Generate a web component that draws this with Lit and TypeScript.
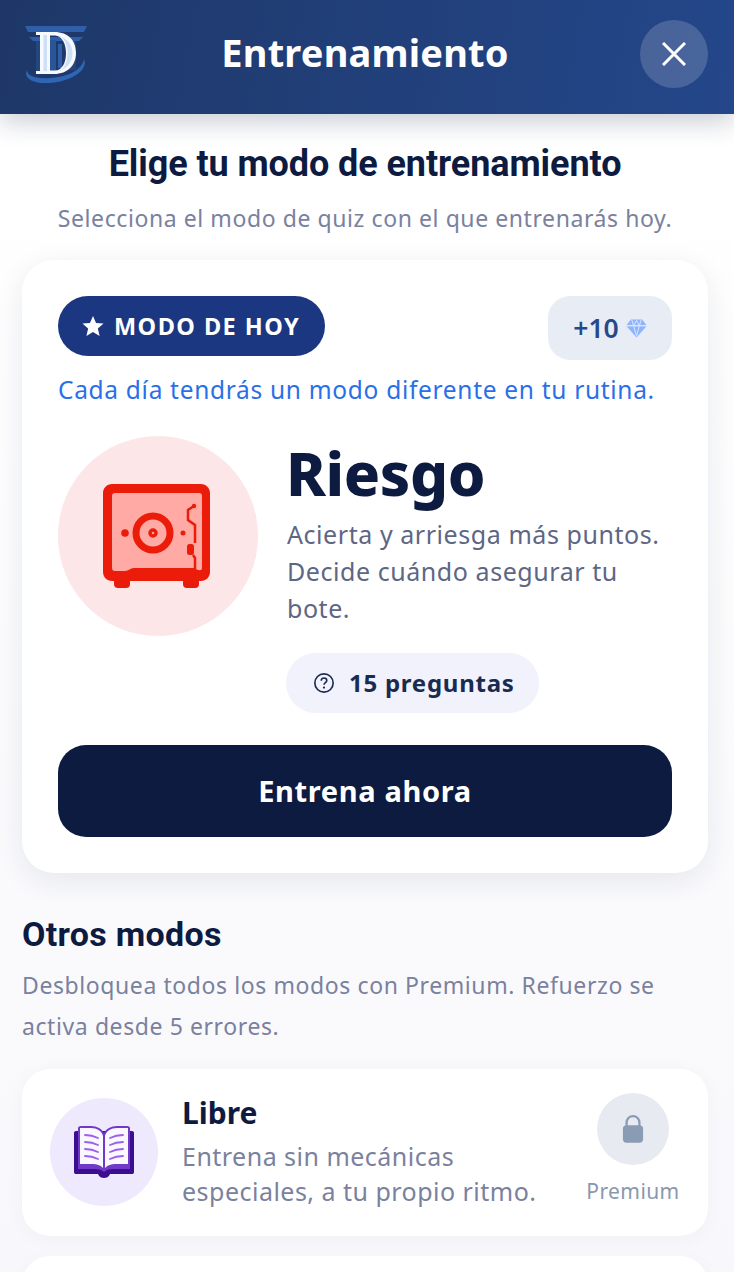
import { LitElement, html, css, svg } from "lit";
import { customElement } from "lit/decorators.js";

const logo = svg`<svg class="logo" viewBox="0 0 64 60" width="64" height="60" aria-hidden="true">
  <path d="M1 0H63L60 6H4Z" fill="#2f5fa8"/>
  <path d="M5 11H59L55 15H9Z" fill="#2f5fa8"/>
  <path d="M12 15H20V46H12ZM44 15H52V44H44Z" fill="#24467f"/>
  <path d="M60 33C65 45 45 56 25 57C9 58 -1 52 3 44C3 50 12 53 26 52C44 51 58 44 60 33Z" fill="#2f66b4"/>
  <path d="M26 14H32V45H26Z" fill="#2a5596"/>
  <path d="M34 18H38V42H34Z" fill="#2f5fa8"/>
  <path fill-rule="evenodd" d="M12 6H30C45 6 52 15 52 27C52 39 44 48 30 48H12V45H16V9H12ZM26 9.500V44.500H31C38 44.500 42 37 42 27C42 18 38 9.500 31 9.500Z" fill="#f6f9fe"/>
  <path d="M19.500 9H23V45H19.500ZM38 11C44 14 48.500 19 48.500 27C48.500 35 44 41 38 44C41.500 39 43.500 34 43.500 27C43.500 20 41.500 15 38 11Z" fill="#cfe0f6"/>
</svg>`;

const safe = svg`<svg class="safe" viewBox="0 0 107 104" width="107" height="104" aria-hidden="true">
  <rect x="11" y="85" width="16" height="19" rx="4" fill="#e81c0c"/>
  <rect x="80" y="85" width="16" height="19" rx="4" fill="#e81c0c"/>
  <rect x="1" y="1" width="105" height="95" rx="9" fill="#ffaaa4"/>
  <path fill-rule="evenodd" d="M9 0H98C103 0 107 4 107 9V88C107 93 103 97 98 97H9C4 97 0 93 0 88V9C0 4 4 0 9 0ZM12 9C10 9 9 10 9 12V83C9 86 10 87 12 87H22C26 87 27 84 31 84H92C95 87 99 87 99 84V12C99 10 98 9 96 9Z" fill="#ec1c0a"/>
  <path d="M91 22L85 26V36L92 41V59M90 71L92 74V85" fill="none" stroke="#ec1c0a" stroke-width="2.500"/>
  <rect x="84" y="60" width="7" height="11" rx="2.500" fill="#ec1c0a"/>
  <circle cx="91" cy="22" r="2.200" fill="#ec1c0a"/>
  <circle cx="50" cy="49" r="17" fill="#ffaaa4" stroke="#ec1c0a" stroke-width="7"/>
  <circle cx="50" cy="49" r="3" fill="#ffaaa4" stroke="#ec1c0a" stroke-width="3.500"/>
  <circle cx="22" cy="49" r="3.800" fill="#ec1c0a"/>
  <circle cx="80" cy="49" r="2.500" fill="#ec1c0a"/>
</svg>`;

const book = svg`<svg viewBox="0 0 62 54" width="62" height="54" aria-hidden="true">
  <path d="M3 6H59C60.500 6 61 7 61 8V47C61 48.500 60 49 59 49H37C36 52 33 53 31 53C29 53 26 52 25 49H3C2 49 1 48.500 1 47V8C1 7 1.500 6 3 6Z" fill="#3c0d8e"/>
  <path d="M5 44V3C5 2 6 1 8 1H18C24 1 29 4 31 8C33 4 38 1 44 1H54C56 1 57 2 57 3V44H40C36 44 33 45 31 47C29 45 26 44 22 44Z" fill="#7039c6"/>
  <path d="M7 39V3H18C24 3 29 6 30 11V43C27 40 24 39 20 39ZM55 39V3H44C38 3 33 6 32 11V43C35 40 38 39 42 39Z" fill="#faf7ff"/>
  <path d="M12 10C17 10 21 11 25 13M12 17C17 17 21 18 25 20M12 24C17 24 21 25 25 27M12 31C17 31 21 32 25 34M50 10C45 10 41 11 37 13M50 17C45 17 41 18 37 20M50 24C45 24 41 25 37 27M50 31C45 31 41 32 37 34" fill="none" stroke="#9a62e8" stroke-width="1.800" stroke-linecap="round"/>
</svg>`;

@customElement("app-root")
export class AppRoot extends LitElement {
  static styles = css`
    :host { display: block; width: 734px; height: 1272px; overflow: hidden; background: linear-gradient(180deg, #ffffff 10%, #f8f8fc 100%); font-family: "Noto Sans", sans-serif; }
    .header { height: 114px; display: grid; grid-template-columns: 68px 1fr 68px; align-items: center; padding: 0 26px 0 24px; box-sizing: border-box; background: linear-gradient(100deg, #1e3768 0%, #24478a 100%); box-shadow: 0 8px 24px rgba(20, 30, 70, 0.22); position: relative; color: #fff; }
    .logo { display: block; margin-top: -2px; }
    .header h1 { margin: 0; text-align: center; font: 700 38px/48px "Noto Sans", sans-serif; letter-spacing: 0.2px; position: relative; left: -1px; top: -5px; }
    .close { width: 68px; height: 68px; border-radius: 50%; background: rgba(255, 255, 255, 0.17); display: grid; place-items: center; margin-top: -6px; }
    .intro { text-align: center; padding: 27px 26px 0 22px; }
    .intro h2 { margin: 0; font: 700 36px/46px Roboto, sans-serif; color: #0d1b40; letter-spacing: -0.08px; white-space: nowrap; }
    .intro p { margin: 17px 0 0; font: 400 23px/28px "Noto Sans", sans-serif; color: #7a819e; letter-spacing: 0.58px; white-space: nowrap; }
    .card { margin: 28px 26px 0 22px; height: 613px; box-sizing: border-box; padding: 36px; background: #fff; border-radius: 32px; box-shadow: 0 8px 30px rgba(20, 30, 70, 0.09); }
    .top { display: flex; justify-content: space-between; align-items: flex-start; }
    .badge { height: 60px; width: 267px; box-sizing: border-box; border-radius: 30px; background: #1b3781; color: #fff; display: flex; align-items: center; gap: 10px; padding-left: 24px; font: 700 23.500px/30px "Noto Sans", sans-serif; letter-spacing: 1.45px; }
    .chip { width: 124px; height: 64px; border-radius: 22px; background: #e8edf5; display: flex; align-items: center; justify-content: center; gap: 7px; color: #27498b; font: 600 26.500px/30px "Noto Sans", sans-serif; }
    .daily { margin: 14px 0 0; font: 400 24.500px/32px "Noto Sans", sans-serif; color: #2b6fe8; letter-spacing: 0.69px; height: 32px; white-space: nowrap; }
    .hero { display: flex; gap: 29px; margin-top: 30px; height: 309px; }
    .hero-icon { width: 200px; height: 200px; border-radius: 50%; background: #fce6e8; display: grid; place-items: center; flex: none; }
    .safe { margin-right: 3px; }
    .hero-text { display: flex; flex-direction: column; align-items: flex-start; min-width: 0; }
    .hero-text h3 { margin: 0 0 0 -1px; font: 800 60px/74px "Noto Sans", sans-serif; letter-spacing: -0.4px; color: #0d1b40; height: 80px; }
    .hero-text p { margin: 0; font: 400 25px/37px "Noto Sans", sans-serif; letter-spacing: 0.56px; color: #5d6685; white-space: nowrap; }
    .pill { margin-top: 26px; margin-left: -1px; width: 253px; height: 60px; box-sizing: border-box; border-radius: 30px; background: #f1f2fb; display: flex; align-items: center; gap: 14px; padding-left: 27px; font: 700 24px/30px "Noto Sans", sans-serif; letter-spacing: 0.75px; color: #1a2b52; }
    .cta { height: 92px; border-radius: 28px; background: #0d1b40; color: #fff; display: grid; place-items: center; font: 700 29px/36px "Noto Sans", sans-serif; letter-spacing: 0.65px; }
    .others { padding: 0 26px 0 22px; }
    .others h2 { margin: 39px 0 0; font: 700 34px/44px Roboto, sans-serif; color: #0d1b40; letter-spacing: 0.3px; }
    .others > p { margin: 9px 0 0; font: 400 23px/41px "Noto Sans", sans-serif; color: #7a819e; letter-spacing: 0.59px; white-space: nowrap; }
    .mode { margin-top: 22px; height: 167px; box-sizing: border-box; background: #fff; border-radius: 28px; box-shadow: 0 4px 20px rgba(20, 30, 70, 0.035); display: flex; padding: 0 28px; position: relative; }
    .mode-icon { width: 108px; height: 108px; margin-top: 29px; border-radius: 50%; background: #efe9fe; display: grid; place-items: center; flex: none; }
    .mode-text { margin-left: 24px; padding-top: 24px; flex: 1; }
    .mode-text h3 { margin: 0; font: 700 30px/40px "Noto Sans", sans-serif; color: #0d1b40; }
    .mode-text p { margin: 6px 0 0; font: 400 25px/35px "Noto Sans", sans-serif; letter-spacing: 0.48px; color: #7a819e; white-space: nowrap; }
    .lock { width: 92px; flex: none; margin-right: 1px; padding-top: 24px; display: flex; flex-direction: column; align-items: center; font: 400 21px/28px "Noto Sans", sans-serif; color: #8a98ae; letter-spacing: 0.4px; }
    .lock-c { width: 72px; height: 72px; border-radius: 50%; background: #e8eaf1; display: grid; place-items: center; margin-bottom: 12px; }
    .next { margin-top: 20px; height: 60px; background: #fff; border-radius: 28px; box-shadow: 0 4px 20px rgba(20, 30, 70, 0.035); }
  `;

  render() {
    return html`
      <header class="header">
        ${logo}
        <h1>Entrenamiento</h1>
        <div class="close">
          <svg viewBox="0 0 24 24" width="24" height="24" aria-hidden="true"><path d="M1 1L23 23M23 1L1 23" stroke="#fff" stroke-width="3" fill="none"/></svg>
        </div>
      </header>
      <section class="intro">
        <h2>Elige tu modo de entrenamiento</h2>
        <p>Selecciona el modo de quiz con el que entrenarás hoy.</p>
      </section>
      <section class="card">
        <div class="top">
          <div class="badge">
            <svg viewBox="0 0 24 24" width="22" height="22" aria-hidden="true"><path d="M12 1L15.300 8.600L23.500 9.300L17.300 14.700L19.200 22.800L12 18.500L4.800 22.800L6.700 14.700L0.500 9.300L8.700 8.600Z" fill="#fff"/></svg>
            <span>MODO DE HOY</span>
          </div>
          <div class="chip">
            <span>+10</span>
            <svg viewBox="0 0 22 20" width="21" height="19" aria-hidden="true"><path d="M5 0.500H17L21.500 6.500H0.500Z" fill="#8fb4fb"/><path d="M0.500 7.500H21.500L11 19.500Z" fill="#8fb4fb"/><path d="M6 1L8 7L11 18L14 7L16 1M1 7H21M8 7L11 1.500L14 7" stroke="#dce8ff" stroke-width="1" fill="none"/></svg>
          </div>
        </div>
        <p class="daily">Cada día tendrás un modo diferente en tu rutina.</p>
        <div class="hero">
          <div class="hero-icon">${safe}</div>
          <div class="hero-text">
            <h3>Riesgo</h3>
            <p>Acierta y arriesga más puntos.<br />Decide cuándo asegurar tu<br />bote.</p>
            <div class="pill">
              <svg viewBox="0 0 24 24" width="22" height="22" aria-hidden="true"><circle cx="12" cy="12" r="10" fill="none" stroke="#1a2b52" stroke-width="1.800"/><path d="M9 9.500C9 7.500 10.500 6.500 12 6.500C13.800 6.500 15 7.700 15 9.200C15 11.500 12 11.500 12 14" fill="none" stroke="#1a2b52" stroke-width="1.800"/><circle cx="12" cy="17" r="1.200" fill="#1a2b52"/></svg>
              <span>15 preguntas</span>
            </div>
          </div>
        </div>
        <div class="cta">Entrena ahora</div>
      </section>
      <section class="others">
        <h2>Otros modos</h2>
        <p>Desbloquea todos los modos con Premium. Refuerzo se<br />activa desde 5 errores.</p>
        <div class="mode">
          <div class="mode-icon">${book}</div>
          <div class="mode-text">
            <h3>Libre</h3>
            <p>Entrena sin mecánicas<br />especiales, a tu propio ritmo.</p>
          </div>
          <div class="lock">
            <div class="lock-c">
              <svg viewBox="0 0 24 32" width="22" height="30" aria-hidden="true"><path d="M5 14V9C5 5 8 2 12 2C16 2 19 5 19 9V14" fill="none" stroke="#8a9cb4" stroke-width="2.500"/><rect x="1" y="12" width="22" height="19" rx="4" fill="#8a9cb4"/></svg>
            </div>
            <span>Premium</span>
          </div>
        </div>
        <div class="next"></div>
      </section>
    `;
  }
}
